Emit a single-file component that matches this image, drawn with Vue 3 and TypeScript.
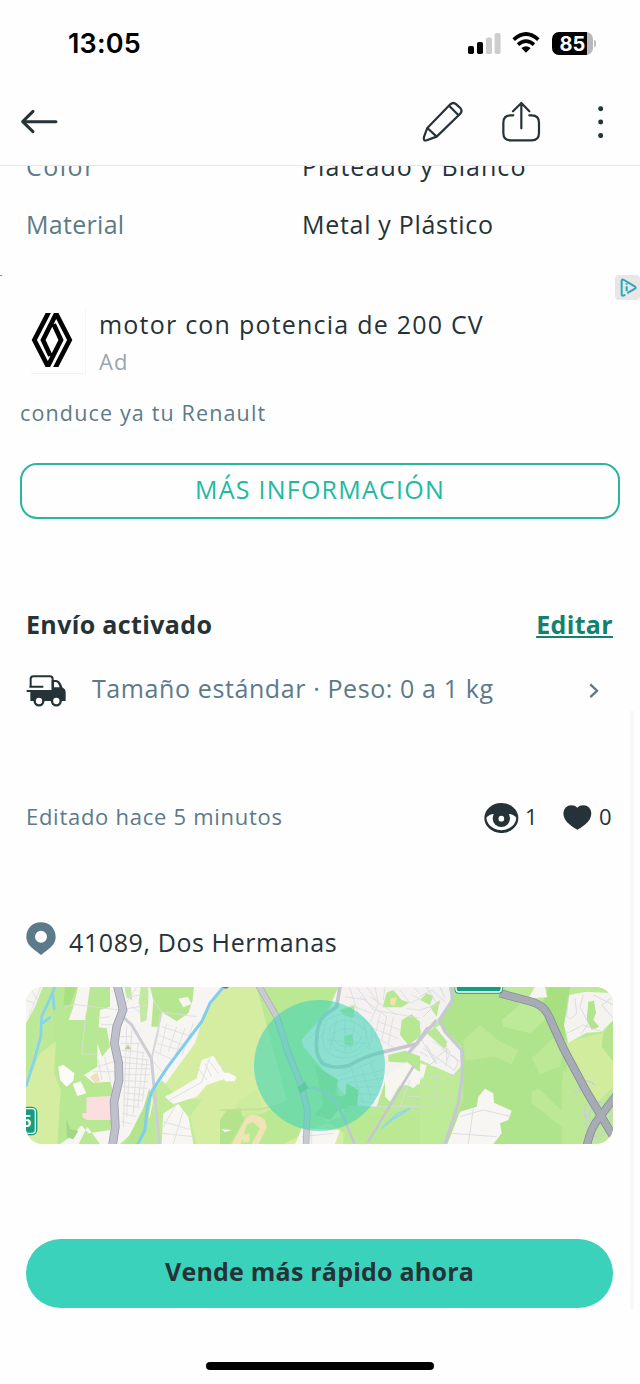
<script setup lang="ts">
interface Attribute {
  label: string
  value: string
}

const attributes: Attribute[] = [
  { label: 'Color', value: 'Plateado y Blanco' },
  { label: 'Material', value: 'Metal y Plástico' },
]
const views = 1
const likes = 0
</script>

<template>
  <div class="screen">
    <div class="status">
      <span class="time">13:05</span>
      <div class="indicators">
        <svg class="signal" viewBox="0 0 33 21">
          <rect x="0" y="13" width="6" height="8" rx="1.8" fill="#000" />
          <rect x="9" y="9" width="6" height="12" rx="1.8" fill="#000" />
          <rect x="18" y="4.5" width="6" height="16.5" rx="1.8" fill="#cdcdcd" />
          <rect x="26.6" y="0" width="6" height="21" rx="1.8" fill="#cdcdcd" />
        </svg>
        <svg class="wifi" viewBox="0 0 84 64">
          <g fill="none" stroke="#000" stroke-width="11">
            <path d="M5 23Q42 -11 79 23" />
            <path d="M18 38Q42 17 66 38" />
          </g>
          <path d="M28 48Q42 37 56 48L42 62Z" fill="#000" />
        </svg>
        <div class="battery">85</div>
        <div class="battery-tip"></div>
      </div>
    </div>

    <header class="bar">
      <svg class="back" viewBox="60 324 118 80">
        <path d="M168 365H70M99 334L68 365L99 395" />
      </svg>
      <svg class="pencil" viewBox="300 296 136 136">
        <path d="M322 383L391 312Q400 304 409 312L421 323Q429 332 420 341L350 409L320 420Q309 423 312 410ZM322 383L350 409M388 317L415 344" />
      </svg>
      <svg class="share" viewBox="540 296 126 136">
        <path d="M580 345H572Q550 345 550 367V398Q550 420 572 420H635Q657 420 657 398V367Q657 345 635 345H628M604 384V309M579 333L604 308L628 333" />
      </svg>
      <svg class="dots" viewBox="0 0 16 96">
        <circle cx="8" cy="8" r="7.5" /><circle cx="8" cy="48" r="7.5" /><circle cx="8" cy="89" r="7.5" />
      </svg>
    </header>

    <section class="attributes">
      <div v-for="item in attributes" :key="item.label" class="attribute">
        <span class="label">{{ item.label }}</span>
        <span class="value">{{ item.value }}</span>
      </div>
    </section>

    <section class="ad">
      <i class="speck"></i>
      <svg class="adchoices" viewBox="0 0 75 75">
        <rect width="75" height="75" rx="12" fill="#e9e6e8" />
        <path d="M29 60Q20 66 20 56V18Q20 11 27 15L59 34Q65 38 59 42L39 53" fill="none" stroke="#27a9ba" stroke-width="6" stroke-linecap="round" />
        <path d="M35 34V49M35 25V29" stroke="#27a9ba" stroke-width="6" />
      </svg>
      <div class="ad-head">
        <div class="logo">
          <svg viewBox="94 160 128 162">
            <path d="M152 148L104 241L143 317H146L184 241L162 194M162 334L210 241L171 165H168L130 241L152 288" fill="none" stroke="#000" stroke-width="14" />
          </svg>
        </div>
        <div class="ad-copy">
          <div class="ad-title">motor con potencia de 200 CV</div>
          <div class="ad-tag">Ad</div>
        </div>
      </div>
      <p class="ad-text">conduce ya tu Renault</p>
      <button class="ad-button"><span>MÁS INFORMACIÓN</span></button>
    </section>

    <section class="shipping">
      <div class="ship-head">
        <h2>Envío activado</h2>
        <a class="edit">Editar</a>
      </div>
      <div class="ship-row">
        <svg class="truck" viewBox="78 256 120 96">
          <path d="M92 288V268Q92 260 100 260H150Q158 260 158 268V300M88 291H130" fill="none" stroke="#253238" stroke-width="6" />
          <path d="M80 301H155V271H169Q178 272 182 281L188 294Q197 298 197 308V334H91V307H80Z" fill="#253238" />
          <path d="M162 277H168Q173 278 175 283L179 293H162Z" fill="#fff" />
          <g fill="#fff" stroke="#253238" stroke-width="7"><circle cx="117" cy="334" r="13" /><circle cx="169" cy="334" r="13" /></g>
        </svg>
        <span class="ship-text">Tamaño estándar · Peso: 0 a 1 kg</span>
        <svg class="chevron" viewBox="0 0 30 46"><path d="M4 4L24 23L4 42" /></svg>
      </div>
    </section>

    <section class="stats">
      <span class="edited">Editado hace 5 minutos</span>
      <svg class="eye" viewBox="494 638 104 92">
        <ellipse cx="546" cy="683" rx="51" ry="45" fill="#253238" />
        <path d="M501 682Q510 672 524 671H568Q582 672 591 682Q589 703 569 714Q546 725 523 714Q503 703 501 682Z" fill="#fff" />
        <circle cx="546" cy="684" r="26" fill="#253238" />
        <circle cx="546" cy="685" r="8.5" fill="#fff" />
      </svg>
      <span class="count views">{{ views }}</span>
      <svg class="heart" viewBox="728 646 86 76">
        <path d="M771 720Q765 719 747 704Q729 690 729 671Q731 648 753 647Q765 647 771 654Q777 647 789 647Q811 648 813 671Q813 690 795 704Q777 719 771 720Z" fill="#253238" />
      </svg>
      <span class="count">{{ likes }}</span>
    </section>

    <section class="place">
      <svg class="pin" viewBox="48 67 90 100">
        <path fill-rule="evenodd" d="M93 68C118 68 137 86 137 112C137 137 116 148 93 166C70 148 49 137 49 112C49 86 68 68 93 68ZM93 93A18 18 0 1 0 93 129A18 18 0 1 0 93 93Z" fill="#5c7a89" />
      </svg>
      <span>41089, Dos Hermanas</span>
    </section>

    <div class="map">
      <svg viewBox="26 987 587 157">
        <rect x="26" y="987" width="587" height="157" fill="#bce998" />
        <!-- western district -->
        <g transform="translate(10 900) scale(.33333)">
          <path d="M130 261H330V732H145L152 560L130 470Z" fill="#b8e894" />
          <path d="M48 560L90 460L138 424L132 520L152 570L142 732H48Z" fill="#d4eda0" />
          <path d="M165 261H200L180 315H160Z" fill="#a9e084" />
          <path d="M48 261H98L75 320L48 370Z" fill="#f7f5f2" />
          <path d="M204 261H240L226 360H176L190 320Z" fill="#f7f5f2" />
          <path d="M630 261H1000V732H550L520 640L480 600L440 570L560 400Z" fill="#d5eda0" />
          <path d="M300 261H640L580 350L555 430L430 600L420 650L330 732L270 732L232 680L206 732H150L180 712L215 676L235 700L300 690L320 600L300 545L250 548L222 525L262 500L262 430L276 470L300 440L290 385L266 382L270 330L300 320Z" fill="#f7f5f2" />
          <path d="M420 261H552L548 300L535 340L500 364L455 336L444 380H424L430 300Z" fill="#b6e790" />
          <path d="M343 261H415V308L410 360L392 368L388 312L350 292Z" fill="#c3e9a0" />
          <path d="M362 261H392L382 340L370 325Z" fill="#f7f5f2" />
          <path d="M505 296L533 290L545 312L520 322Z" fill="#f7f5f2" />
          <path d="M145 500L160 494L193 520L190 542L170 560L150 540ZM188 552L212 544L229 580L202 588Z" fill="#fcfbf7" />
          <path d="M230 592L305 588L307 660H232L217 652V640H229Z" fill="#fbdfe0" />
          <path d="M240 530L262 516L270 542L255 550Z" fill="#eee0bd" />
          <path d="M170 656L180 686L205 692L190 718L170 712Z" fill="#a4d785" />
          <path d="M345 732L400 624L418 565L425 600L410 680L386 732Z" fill="#b4e58e" />
          <path d="M425 580L455 540L500 590L575 600L540 650L560 732H445Z" fill="#c1eb98" />
          <path d="M464 590L490 577L560 535L575 480L610 467L640 515L665 530L590 555L560 590L490 612Z" fill="#f9f7f3" />
          <path d="M460 640L505 612L535 650L550 732H455Z" fill="#f8f6f3" />
          <path d="M636 690L690 600L740 570L770 650L720 732H628Z" fill="#cdec9c" />
          <g fill="none" stroke="#dcdce0" stroke-width="2.5">
            <path d="M92 261L56 350M62 261L80 300M48 300L72 310M162 324L190 313L330 330L415 315M228 340L215 462H265M261 355L300 350M272 374H310M262 500L310 486M250 515L315 515M276 540L265 480M302 545L284 472" />
            <path d="M350 380L340 680M365 390L350 650M384 430L370 640M400 455L384 620M411 478L398 600M330 410H370M332 430H390M332 450L402 458M332 470L415 480M340 488L420 495M340 506H420M340 524H418M340 542L416 545M340 560L412 565M340 578L405 585M340 596L400 603M340 615L390 622M336 640L380 650M334 664L365 672" />
            <path d="M350 292L395 285M348 310L380 261M366 320L410 350M430 300L455 336L560 350M450 345L445 400L425 480M455 380L540 408M445 405L520 435M440 430L510 450M435 455L490 480M470 370L450 460M500 380L475 455M525 385L495 470M550 370L515 470M430 485L470 530" />
            <path d="M470 605L575 547L600 470M565 505L590 540M585 490L605 530M595 480L625 520M500 610L460 680M520 630L490 732M460 665L545 690M455 700L550 710M620 475L650 520" />
          </g>
          <path d="M332 345L365 375L424 475L432 560L449 735" fill="none" stroke="#cdced3" stroke-width="9" />
          <path d="M424 478L455 340" fill="none" stroke="#d5d6da" stroke-width="5" />
          <path d="M135 261L118 300L95 350L92 410L73 480L48 560M128 280L133 330M98 370L122 350" fill="none" stroke="#86d3ee" stroke-width="8" />
          <path d="M640 261L600 310L575 365L545 405L470 505L425 575L412 620L405 690L382 735" fill="none" stroke="#80cdec" stroke-width="9" />
          <path d="M320 250L330 290L339 330L320 380L313 430L326 490L327 540L312 605L316 680L307 740" fill="none" stroke="#9c9dad" stroke-width="26" />
          <path d="M320 250L330 290L339 330L320 380L313 430L326 490L327 540L312 605L316 680L307 740" fill="none" stroke="#bfc0cc" stroke-width="21" />
          <path d="M344 448L354 433L363 448Z" fill="#bbcca1" />
          <circle cx="647" cy="256" r="10" fill="#5279ac" />
          <g fill="#159b7d" stroke="#fff" stroke-width="4"><rect x="10" y="624" width="68" height="78" rx="12" stroke="#159b7d" stroke-width="8" /><rect x="10" y="626" width="66" height="74" rx="10" /></g>
          <text x="37" y="680" font-family="Liberation Sans, sans-serif" font-size="48" font-weight="bold" fill="#fff">5</text>
        </g>
        <!-- centre -->
        <g transform="translate(220 970) scale(.33333)">
          <path d="M110 51H360L320 130L250 200L280 260L350 320L360 420L300 440L420 522H700V430H380L190 522H0V450L130 430L200 390Z" fill="#bbe993" />
          <path d="M20 420L60 415L70 450L30 522H0V450Z" fill="#b4e38d" />
          <path d="M355 51H640V340L500 350L470 410L400 405L335 330L250 230L245 210L325 120Z" fill="#f4f1f0" />
          <path d="M500 68L520 60L545 90L568 98L545 112L488 112ZM545 150L575 133L605 160L600 200L565 225L540 195ZM505 255L555 242L630 270V310L580 300L560 278L505 275ZM360 120L405 105L400 145L370 135ZM372 198L398 192L400 228L374 224ZM500 320L525 345L510 405L470 410ZM605 65L630 85L620 102Z" fill="#b6e892" />
          <path d="M512 85L530 82L525 108L510 103Z" fill="#f1e3b0" />
          <path d="M495 320L560 275L615 320L580 355L545 335L510 395L495 380Z" fill="#f7f5f0" />
          <path d="M285 285L355 330L345 375L375 380L380 340L415 360L412 408L355 420L330 450L285 435L310 405Z" fill="#aede87" />
          <path d="M230 512L245 475L360 480L345 522H225Z" fill="#f8f6f3" />
          <path d="M0 310L25 308L49 320L45 334H15L0 285Z" fill="#faf9f6" />
          <path d="M35 522L80 440Q105 425 135 450L140 475L115 522H95L120 475L98 455L80 465L62 522ZM66 495L88 490L90 514L70 518Z" fill="#f0e4b6" />
          <path d="M5 478L35 480L15 486Z" fill="#fff" />
          <g fill="none" stroke="#dbdadf" stroke-width="2.4">
            <path d="M388 51L415 130M410 51L460 120L630 150M440 51L480 105M465 51L475 100L450 160M375 80L440 90M390 105L455 130M420 80L500 140M450 80L530 135M480 130L465 200L525 235M500 140L485 210M520 140L505 220M540 60L570 100L610 80L580 51M560 115L630 125M575 75L630 100M460 175L535 205M475 155L540 180M430 155L450 235M495 51L490 90" />
            <path d="M320 150Q390 105 455 170L455 215Q400 285 335 255Q290 225 320 150ZM330 170Q385 125 440 185Q440 235 385 250Q320 245 330 170ZM340 190Q385 155 425 200Q415 230 380 230Q340 228 340 190ZM305 160L270 205M320 175L290 215M350 150L330 240M375 145V250M405 155L390 240M320 210L440 220" />
            <path d="M350 320L470 270M360 330L490 300M380 340L490 325M400 352L485 350M415 370L475 375M415 392L465 400M390 285L430 400M420 280L455 390M450 275L480 350" />
            <path d="M380 410H630M560 380H630M570 330L540 410M245 500L340 490M275 480V522" />
          </g>
          <g fill="none" stroke="#c6c7ce" stroke-linecap="round">
            <path d="M360 51L350 110L315 135Q290 155 290 210Q285 260 310 282Q350 300 390 285Q430 260 480 248L590 222L640 150" stroke-width="11" />
            <path d="M240 352L290 355L340 385L370 440L405 525M580 290L445 515" stroke-width="8" />
            <path d="M0 420L120 418L200 400L245 350" stroke="#c3e09b" stroke-width="5" />
          </g>
          <path d="M115 45L170 140L205 250L245 350L262 420L258 528" fill="none" stroke="#aeb1bd" stroke-width="20" />
          <path d="M115 45L170 140L205 250L245 350L262 420L258 528" fill="none" stroke="#cacbd1" stroke-width="15" />
          <path d="M233 352L255 335L265 355L240 370Z" fill="#8abd80" />
          <path d="M485 475L530 432L572 414L540 435L515 450L485 475" fill="none" stroke="#91d8e4" stroke-width="5" />
        </g>
        <!-- eastern district -->
        <g transform="translate(420 970) scale(.33333)">
          <path d="M100 51H440V522H75L130 390L130 240L60 160Z" fill="#afe38c" />
          <path d="M250 51H380L375 100L420 110L330 190L250 170L245 150L300 105Z" fill="#bdea98" />
          <path d="M130 210L180 165L240 215L295 240L275 282L225 260L135 272ZM335 265L400 205L440 210L420 290L360 312ZM335 365L355 356L430 425L432 475L335 400ZM430 300L500 345L520 522H425V360Z" fill="#bde996" />
          <path d="M390 51H450L430 215L395 170L365 100Z" fill="#a8e080" />
          <path d="M440 215L545 190L580 165V350L530 400L475 320Z" fill="#d2ec9d" />
          <path d="M580 150L550 190L545 230L580 275Z" fill="#b4e48b" />
          <path d="M448 75L500 65L580 70V150L545 185L500 188L445 218L432 165Z" fill="#f5f3f0" />
          <path d="M505 95L522 92L528 130L520 150L538 170L515 180L500 150Z" fill="#b1e48b" />
          <path d="M345 51H375L382 82L325 85Z" fill="#f7f5f2" />
          <path d="M0 51H95L90 110L50 160L0 180Z" fill="#f2f1ef" />
          <path d="M0 210L30 180L60 165L125 230L130 280L100 315L0 270Z" fill="#f5f3f1" />
          <path d="M20 190L45 170L82 215L75 238ZM0 90L20 70L40 78L30 105ZM30 110L60 90L50 140Z" fill="#b9e797" />
          <path d="M0 270L80 310L125 320L120 390L75 522H0V340Z" fill="#bdeb97" />
          <path d="M0 280L20 285L10 325L0 330Z" fill="#f6f5f0" />
          <path d="M120 425L170 410L175 380L195 356L220 370L222 398L275 422L265 450L240 460L245 490L220 522H82Z" fill="#f8f6f3" />
          <g fill="none" stroke="#d7d7dc" stroke-width="2.5">
            <path d="M5 210L40 270L85 235M10 235L105 302M20 225L50 282M40 215L90 245L75 290M65 235L120 275M0 245L25 260M80 225V270M90 255Q125 265 105 298M0 80L35 60L75 95M20 51L50 100L10 140M60 51L75 85M0 120L60 100" />
            <path d="M0 325L120 312" />
            <path d="M0 350L115 345M0 380L110 378M0 410L112 405M50 320V410M85 318L78 405M20 290L50 270" stroke="#c9deb8" />
            <path d="M120 440L190 420L275 440M160 415L145 522M95 490L230 500M445 80L440 140Q450 155 470 130L465 85M490 75L480 110L505 160L485 190M520 75L580 105M580 80L545 105L580 145M440 190L490 165L545 185" />
          </g>
          <path d="M92 51L98 90L58 150L75 185L125 240L128 310L115 400L75 522M-35 250L50 150" fill="none" stroke="#c7c9d0" stroke-width="10" />
          <g fill="none" stroke="#caced0" stroke-width="4"><path d="M475 360Q490 315 525 345M500 455Q480 400 520 395Q565 395 575 430Q560 500 520 500Q490 475 500 430M520 405Q490 440 530 480M575 410Q530 440 565 495M460 370L500 355" /></g>
          <g fill="none" stroke="#888d99" stroke-width="25"><path d="M240 70L335 95Q370 105 385 135L430 235L500 365L580 500M590 375L540 440Q510 475 500 530" /></g>
          <g fill="none" stroke="#a7abb6" stroke-width="20"><path d="M240 70L335 95Q370 105 385 135L430 235L500 365L580 500M590 375L540 440Q510 475 500 530" /></g>
          <rect x="104" y="20" width="144" height="51" rx="12" fill="#159b7d" />
          <rect x="108" y="20" width="136" height="46" rx="9" fill="#159b7d" stroke="#fff" stroke-width="4" />
        </g>
        <circle cx="319.5" cy="1065.5" r="65.5" fill="#3bd2b8" fill-opacity=".56" />
      </svg>
    </div>

    <button class="cta"><span>Vende más rápido ahora</span></button>
    <div class="home"></div>
    <div class="scroll-edge"></div>
  </div>
</template>

<style>
html,
body {
  margin: 0;
  background: #fefefe;
}
</style>

<style scoped>
.screen {
  position: relative;
  width: 640px;
  height: 1384px;
  overflow: hidden;
  display: flex;
  flex-direction: column;
  background: #fefefe;
  color: #253238;
  font-family: "Open Sans", "Noto Sans", sans-serif;
  font-size: 25px;
  line-height: 30px;
  white-space: nowrap;
}
.screen > * {
  flex: none;
}
svg {
  display: block;
  flex: none;
}
button {
  font: inherit;
  padding: 0;
  border: 0;
}
.status {
  display: flex;
  justify-content: space-between;
  height: 80px;
  box-sizing: border-box;
  padding: 28px 44px 0 68px;
}
.time {
  font: 600 27px/32px Inter, sans-serif;
  color: #000;
  letter-spacing: 0.2px;
}
.indicators {
  display: flex;
  height: 30px;
  align-items: center;
}
.signal {
  width: 33px;
  height: 21px;
}
.wifi {
  width: 28px;
  height: 21.3px;
  margin-left: 11px;
}
.battery {
  width: 41px;
  height: 23px;
  margin-left: 12px;
  border-radius: 7px;
  background: linear-gradient(90deg, #000 35px, #b8b8b8 35px);
  color: #fff;
  font: 700 20px/24px Inter, sans-serif;
  text-align: center;
}
.battery-tip {
  width: 2px;
  height: 7px;
  margin-left: 1px;
  border-radius: 0 3px 3px 0;
  background: #bbb;
}
.bar {
  display: flex;
  align-items: center;
  height: 86px;
  box-sizing: border-box;
  padding: 0 37px 2px 20px;
  border-bottom: 1px solid #e4e8eb;
}
.bar path {
  fill: none;
  stroke: #253238;
  stroke-width: 6.6;
  stroke-linecap: round;
  stroke-linejoin: round;
}
.bar .back path {
  stroke-width: 9;
}
.back {
  width: 39.3px;
  height: 26.7px;
}
.pencil {
  width: 45.3px;
  height: 45.3px;
  margin-left: auto;
}
.share {
  width: 42px;
  height: 45.3px;
  margin-left: 34.7px;
}
.dots {
  width: 5.3px;
  height: 32px;
  margin-left: 55.4px;
  fill: #253238;
}
.attributes {
  height: 109px;
  overflow: hidden;
}
.attribute {
  display: flex;
  height: 57.5px;
  padding-left: 26px;
}
.attribute:first-child {
  margin-top: -15px;
}
.label {
  width: 276px;
  letter-spacing: 0.3px;
  color: #5c7a89;
}
.value {
  letter-spacing: 0.7px;
}
.attribute:first-child .label {
  letter-spacing: 1.5px;
}
.attribute:first-child .value {
  letter-spacing: 1.05px;
}
.ad {
  position: relative;
  height: 325px;
}
.speck {
  position: absolute;
  left: 0;
  top: 0;
  width: 2px;
  height: 1px;
  background: #888;
}
.adchoices {
  position: absolute;
  left: 615px;
  top: 0;
  width: 25px;
  height: 25px;
}
.ad-head {
  display: flex;
  padding-top: 34px;
}
.logo {
  width: 54px;
  height: 64px;
  margin-left: 31px;
  border-bottom: 1px solid #f2f2f2;
}
.logo svg {
  width: 42.7px;
  height: 54px;
  margin-top: 4px;
}
.ad-copy {
  padding-left: 13px;
  border-left: 1px solid #f5f5f5;
}
.ad-title {
  letter-spacing: 1.22px;
}
.ad-tag {
  margin-top: 8px;
  font-size: 22px;
  line-height: 28px;
  letter-spacing: 1px;
  color: #99a6af;
}
.ad-text {
  margin: 25px 0 0 20px;
  font-size: 21.5px;
  line-height: 26px;
  letter-spacing: 1.15px;
  color: #5c7a89;
}
.ad-button {
  display: block;
  width: 600px;
  height: 56px;
  margin: 37px 0 0 20px;
  box-sizing: border-box;
  border: 2px solid #29b5a0;
  border-radius: 17px;
  background: transparent;
  color: #22b8a2;
  letter-spacing: 1.25px;
}
.ad-button span {
  position: relative;
  top: -2px;
}
.shipping {
  padding: 9px 27px 0 26px;
  height: 192px;
  box-sizing: border-box;
}
.ship-head {
  display: flex;
  justify-content: space-between;
}
h2,
.edit {
  margin: 0;
  font-size: 25px;
  font-weight: 700;
  letter-spacing: 0.35px;
}
.edit {
  color: #10826d;
  text-decoration: underline;
  text-decoration-thickness: 2px;
  text-underline-offset: 2px;
}
.ship-row {
  display: flex;
  align-items: center;
  margin-top: 34px;
  height: 32px;
}
.truck {
  width: 40px;
  height: 32px;
  margin: 3px 0 0 0;
}
.ship-text {
  margin: -2px 0 0 26px;
  letter-spacing: 0.6px;
  color: #5c7a89;
}
.chevron {
  width: 10px;
  height: 15.5px;
  margin: 3px 14px 0 auto;
}
.chevron path {
  fill: none;
  stroke: #5c7a89;
  stroke-width: 7;
}
.stats {
  display: flex;
  align-items: center;
  height: 34px;
  margin-top: 8px;
  padding: 0 28px 0 26px;
  font-size: 22px;
}
.edited {
  margin: -2px auto 0 0;
  letter-spacing: 0.72px;
  color: #5c7a89;
}
.eye {
  width: 34.7px;
  height: 30.7px;
  margin-top: 2px;
}
.count {
  width: 13px;
  margin: -2px 0 0 7px;
}
.views {
  margin: -2px 25.3px 0 6px;
}
.heart {
  width: 28.7px;
  height: 25.3px;
  margin-top: 2px;
}
.place {
  display: flex;
  height: 34px;
  margin-top: 88px;
  padding-left: 26px;
}
.pin {
  width: 30px;
  height: 33.3px;
}
.place span {
  margin: 5px 0 0 13px;
  letter-spacing: 0.6px;
}
.map {
  width: 587px;
  height: 157px;
  margin: 31px 0 0 26px;
  border-radius: 17px;
  overflow: hidden;
}
.map svg {
  width: 587px;
  height: 157px;
}
.cta {
  width: 587px;
  height: 69px;
  margin: 95px 0 0 26px;
  border-radius: 35px;
  background: #3bd2bb;
  color: #253238;
  font-weight: 700;
  letter-spacing: 0.22px;
}
.cta span {
  position: relative;
  top: -3px;
}
.home {
  width: 228px;
  height: 8px;
  margin: 54px 0 0 206px;
  border-radius: 4px;
  background: #000;
}
.scroll-edge {
  position: absolute;
  left: 630px;
  top: 711px;
  width: 4px;
  height: 598px;
  background: #f7f8f8;
}
</style>
